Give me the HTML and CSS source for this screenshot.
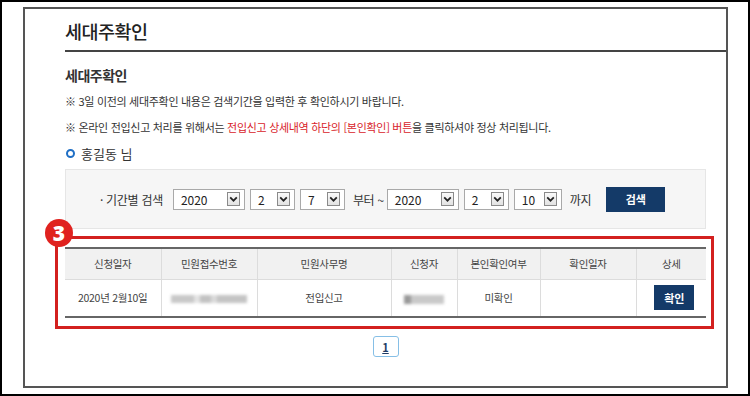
FILE: index.html
```html
<!DOCTYPE html>
<html lang="ko">
<head>
<meta charset="utf-8">
<link rel="stylesheet" href="styles.css">
</head>
<body>
<div class="page">
  <div class="frame">
    <h1 class="title">세대주확인</h1>
    <div class="content">
      <h2 class="subtitle">세대주확인</h2>
      <p class="note">※ 3일 이전의 세대주확인 내용은 검색기간을 입력한 후 확인하시기 바랍니다.</p>
      <p class="note">※ 온라인 전입신고 처리를 위해서는 <span class="red">전입신고 상세내역 하단의 [본인확인] 버튼</span>을 클릭하셔야 정상 처리됩니다.</p>
      <div class="user"><span class="ring"></span>홍길동 님</div>

      <div class="search">
        <span class="label">· 기간별 검색</span>
        <div class="sel w72"><span>2020</span><i class="arr"><svg viewBox="0 0 10 10"><path d="M2 3.5 L5 6.5 L8 3.5" fill="none" stroke="#222" stroke-width="1.6"/></svg></i></div>
        <div class="sel w45"><span>2</span><i class="arr"><svg viewBox="0 0 10 10"><path d="M2 3.5 L5 6.5 L8 3.5" fill="none" stroke="#222" stroke-width="1.6"/></svg></i></div>
        <div class="sel w45"><span>7</span><i class="arr"><svg viewBox="0 0 10 10"><path d="M2 3.5 L5 6.5 L8 3.5" fill="none" stroke="#222" stroke-width="1.6"/></svg></i></div>
        <span class="txt">부터 ~</span>
        <div class="sel w72"><span>2020</span><i class="arr"><svg viewBox="0 0 10 10"><path d="M2 3.5 L5 6.5 L8 3.5" fill="none" stroke="#222" stroke-width="1.6"/></svg></i></div>
        <div class="sel w45"><span>2</span><i class="arr"><svg viewBox="0 0 10 10"><path d="M2 3.5 L5 6.5 L8 3.5" fill="none" stroke="#222" stroke-width="1.6"/></svg></i></div>
        <div class="sel w48"><span>10</span><i class="arr"><svg viewBox="0 0 10 10"><path d="M2 3.5 L5 6.5 L8 3.5" fill="none" stroke="#222" stroke-width="1.6"/></svg></i></div>
        <span class="txt">까지</span>
        <button class="btn search-btn">검색</button>
      </div>

      <div class="mark">
        <span class="badge">3</span>
        <table class="grid">
          <colgroup>
            <col style="width:96px"><col style="width:96px"><col style="width:134px"><col style="width:66px"><col style="width:83px"><col style="width:96px"><col style="width:70px">
          </colgroup>
          <thead>
            <tr><th>신청일자</th><th>민원접수번호</th><th>민원사무명</th><th>신청자</th><th>본인확인여부</th><th>확인일자</th><th>상세</th></tr>
          </thead>
          <tbody>
            <tr>
              <td>2020년 2월10일</td>
              <td><span class="blur b1"></span></td>
              <td>전입신고</td>
              <td><span class="blur b2"></span></td>
              <td>미확인</td>
              <td></td>
              <td><button class="btn ok-btn">확인</button></td>
            </tr>
          </tbody>
        </table>
      </div>

      <div class="pager"><a class="pg">1</a></div>
    </div>
  </div>
</div>
</body>
</html>
```

FILE: styles.css
```css
* { box-sizing: border-box; }
html, body { margin: 0; padding: 0; background: #fff; }
body {
  font-family: "Noto Sans CJK KR", "Noto Sans", sans-serif;
  color: #333;
}
.page {
  width: 750px;
  height: 396px;
  border: 2px solid #000;
  padding: 5px 20px 6px 21px;
}
.frame {
  height: 100%;
  border: 2px solid #555;
  padding-left: 40px;
}
.title {
  margin: 0;
  padding: 11px 0 8px;
  font-size: 18.5px;
  line-height: 22px;
  font-weight: 500;
  color: #222;
  letter-spacing: -0.5px;
  border-bottom: 2px solid #444;
}
.content { padding-right: 20px; }
.subtitle {
  margin: 13px 0 3px;
  font-size: 14px;
  line-height: 20px;
  font-weight: 700;
  color: #333;
  letter-spacing: -0.5px;
}
.note {
  margin: 0;
  font-size: 11px;
  line-height: 26px;
  color: #333;
  letter-spacing: -0.3px;
}
.red { color: #d8232a; }
.user {
  display: flex;
  align-items: center;
  height: 26px;
  font-size: 13px;
  color: #333;
}
.ring {
  width: 9px;
  height: 9px;
  border: 2px solid #1f6fc5;
  border-radius: 50%;
  margin: 0 6px 0 1px;
}
.search {
  margin-top: 3px;
  height: 60px;
  background: #f6f6f6;
  border: 1px solid #e6e6e6;
  display: flex;
  align-items: center;
  padding-left: 34px;
  font-size: 12px;
  color: #333;
}
.label { margin-right: 10px; letter-spacing: -0.3px; }
.txt { margin: 0 3px 0 3px; letter-spacing: -0.3px; }
.sel {
  display: flex;
  align-items: center;
  justify-content: space-between;
  height: 21px;
  background: #fff;
  border: 1px solid #a9a9a9;
  padding: 0 4px 0 7px;
  margin-right: 5px;
  font-size: 12px;
  color: #222;
}
.w72 { width: 72px; }
.w45 { width: 45px; }
.w48 { width: 48px; }
.arr {
  display: flex;
  width: 13px;
  height: 14px;
  border: 1px solid #8a8a8a;
  background: linear-gradient(#fafafa, #e2e2e2);
}
.arr svg { width: 11px; height: 12px; }
.btn {
  border: 0;
  background: #143a68;
  color: #fff;
  font-family: inherit;
  font-weight: 700;
  padding: 0;
}
.search-btn {
  width: 59px;
  height: 25px;
  font-size: 11px;
  margin-left: 12px;
}
.mark {
  position: relative;
  margin: 7px -8px 0 -10px;
  border: 3px solid #d3201f;
  padding: 8px 5px 8px 7px;
}
.badge {
  position: absolute;
  left: -13px;
  top: -20px;
  width: 28px;
  height: 28px;
  border-radius: 50%;
  background: #e0221f;
  color: #fff;
  font-weight: 900;
  font-size: 21px;
  line-height: 28px;
  text-align: center;
  font-family: "Noto Sans", "Noto Sans CJK KR", sans-serif;
}
.grid {
  width: 641px;
  border-collapse: collapse;
  table-layout: fixed;
  font-size: 10.5px;
  color: #444;
  letter-spacing: -0.3px;
}
.grid th {
  height: 31px;
  background: #f1f1f1;
  font-weight: 400;
  border-top: 2px solid #666;
  border-bottom: 1px solid #dcdcdc;
  border-left: 1px solid #dcdcdc;
  padding: 0;
}
.grid td {
  height: 38px;
  text-align: center;
  border-bottom: 2px solid #666;
  border-left: 1px solid #dcdcdc;
  padding: 0;
}
.grid th:first-child, .grid td:first-child { border-left: 0; }
.blur {
  display: inline-block;
  vertical-align: middle;
  filter: blur(1.5px);
}
.b1 {
  width: 76px;
  height: 8px;
  background: linear-gradient(90deg, #c8c8c8 0 30%, #e3e3e3 30% 38%, #c2c2c2 38% 52%, #dadada 52% 60%, #c4c4c4 60% 100%);
}
.b2 {
  width: 40px;
  height: 9px;
  background: linear-gradient(90deg, #999 0 18%, #c9c9c9 18% 100%);
}
.ok-btn {
  width: 40px;
  height: 25px;
  font-size: 11px;
  margin-left: 6px;
}
.pager {
  display: flex;
  justify-content: center;
  margin-top: 7px;
}
.pg {
  display: flex;
  align-items: center;
  justify-content: center;
  width: 26px;
  height: 21px;
  border: 1px solid #86bfe6;
  border-radius: 3px;
  font-size: 11px;
  font-weight: 700;
  color: #1e3c66;
  text-decoration: underline;
}
```
